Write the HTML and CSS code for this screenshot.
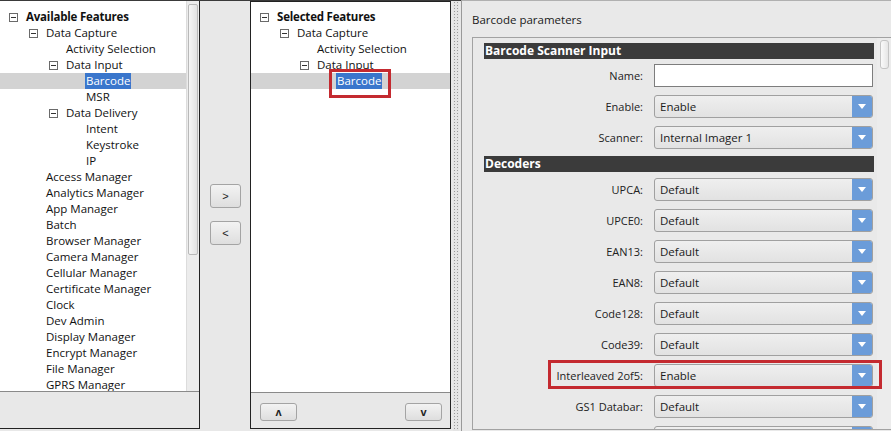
FILE: index.html
```html
<!DOCTYPE html>
<html lang="en">
<head>
  <meta charset="UTF-8" />
  <title>Barcode parameters</title>
  <link rel="stylesheet" href="styles.css">
</head>
<body>
<div class="app">

  <!-- available features -->
  <div class="pane pane-left">
    <div class="list-wrap">
      <div class="tree">
        <div class="node l0 bold"><span class="tog"></span>Available Features</div>
        <div class="node l1"><span class="tog"></span>Data Capture</div>
        <div class="node l2"><span class="tog none"></span>Activity Selection</div>
        <div class="node l2"><span class="tog"></span>Data Input</div>
        <div class="node l3 sel"><span class="tog none"></span><span class="hl">Barcode</span></div>
        <div class="node l3"><span class="tog none"></span>MSR</div>
        <div class="node l2"><span class="tog"></span>Data Delivery</div>
        <div class="node l3"><span class="tog none"></span>Intent</div>
        <div class="node l3"><span class="tog none"></span>Keystroke</div>
        <div class="node l3"><span class="tog none"></span>IP</div>
        <div class="node l1"><span class="tog none"></span>Access Manager</div>
        <div class="node l1"><span class="tog none"></span>Analytics Manager</div>
        <div class="node l1"><span class="tog none"></span>App Manager</div>
        <div class="node l1"><span class="tog none"></span>Batch</div>
        <div class="node l1"><span class="tog none"></span>Browser Manager</div>
        <div class="node l1"><span class="tog none"></span>Camera Manager</div>
        <div class="node l1"><span class="tog none"></span>Cellular Manager</div>
        <div class="node l1"><span class="tog none"></span>Certificate Manager</div>
        <div class="node l1"><span class="tog none"></span>Clock</div>
        <div class="node l1"><span class="tog none"></span>Dev Admin</div>
        <div class="node l1"><span class="tog none"></span>Display Manager</div>
        <div class="node l1"><span class="tog none"></span>Encrypt Manager</div>
        <div class="node l1"><span class="tog none"></span>File Manager</div>
        <div class="node l1"><span class="tog none"></span>GPRS Manager</div>
      </div>
      <div class="vscroll"><div class="thumb"></div></div>
    </div>
    <div class="pane-foot"></div>
  </div>

  <!-- move buttons -->
  <div class="mover">
    <button class="btn btn-move">&gt;</button>
    <button class="btn btn-move">&lt;</button>
  </div>

  <!-- selected features -->
  <div class="pane pane-mid">
    <div class="list-wrap">
      <div class="tree">
        <div class="node l0 bold"><span class="tog"></span>Selected Features</div>
        <div class="node l1"><span class="tog"></span>Data Capture</div>
        <div class="node l2"><span class="tog none"></span>Activity Selection</div>
        <div class="node l2"><span class="tog"></span>Data Input</div>
        <div class="node l3 sel"><span class="tog none"></span><span class="hl marked">Barcode</span></div>
      </div>
    </div>
    <div class="pane-foot foot-btns">
      <button class="btn btn-order">&#x028C;</button>
      <button class="btn btn-order">v</button>
    </div>
  </div>

  <div class="splitter"></div>

  <!-- parameters -->
  <div class="params">
    <div class="params-title">Barcode parameters</div>
    <div class="params-box">
      <div class="form">
        <div class="section-head">Barcode Scanner Input</div>
        <div class="row"><label>Name:</label><div class="text-input"></div></div>
        <div class="row"><label>Enable:</label><div class="select"><span>Enable</span><i class="arrow"></i></div></div>
        <div class="row"><label>Scanner:</label><div class="select"><span>Internal Imager 1</span><i class="arrow"></i></div></div>

        <div class="section-head sec2">Decoders</div>
        <div class="row"><label>UPCA:</label><div class="select"><span>Default</span><i class="arrow"></i></div></div>
        <div class="row"><label>UPCE0:</label><div class="select"><span>Default</span><i class="arrow"></i></div></div>
        <div class="row"><label>EAN13:</label><div class="select"><span>Default</span><i class="arrow"></i></div></div>
        <div class="row"><label>EAN8:</label><div class="select"><span>Default</span><i class="arrow"></i></div></div>
        <div class="row"><label>Code128:</label><div class="select"><span>Default</span><i class="arrow"></i></div></div>
        <div class="row"><label>Code39:</label><div class="select"><span>Default</span><i class="arrow"></i></div></div>
        <div class="row marked-row"><label>Interleaved 2of5:</label><div class="select"><span>Enable</span><i class="arrow"></i></div></div>
        <div class="row"><label>GS1 Databar:</label><div class="select"><span>Default</span><i class="arrow"></i></div></div>
        <div class="row"><label></label><div class="select"><span></span><i class="arrow"></i></div></div>
      </div>
      <div class="vscroll vscroll-r"><div class="thumb"></div></div>
    </div>
  </div>

</div>
</body>
</html>
```

FILE: styles.css
```css
body {
  margin: 0;
  font-family: "Open Sans", "Liberation Sans", sans-serif;
  font-size: 11.5px;
  color: #111;
  background: #e8e8e8;
  overflow: hidden;
}
.app {
  display: flex;
  height: 431px;
  width: 891px;
  border-top: 1px solid #3a3a3a;
  box-sizing: border-box;
}

/* panes with trees */
.pane {
  display: flex;
  flex-direction: column;
  height: 428px;
  box-sizing: border-box;
  border-bottom: 1px solid #222;
  background: #e8e8e8;
}
.pane-left {
  width: 200px;
  border-right: 1px solid #222;
}
.pane-mid {
  width: 201px;
  border-left: 1px solid #222;
  border-right: 1px solid #222;
  border-top: 1px solid #222;
}
.list-wrap {
  display: flex;
  height: 390px;
  background: #fff;
  border-bottom: 1px solid #8a8a8a;
  overflow: hidden;
}
.tree {
  flex: 1;
  padding-top: 8px;
}
.pane-mid .tree {
  padding-top: 7px;
}
.node {
  height: 16px;
  line-height: 16px;
  white-space: nowrap;
  display: flex;
  align-items: center;
}
.node.bold {
  font-weight: bold;
  letter-spacing: -0.2px;
}
.l0 { padding-left: 9px; }
.l1 { padding-left: 29px; }
.l2 { padding-left: 49px; }
.l3 { padding-left: 69px; }

.tog {
  width: 7px;
  height: 7px;
  border: 1px solid #6a6a6a;
  margin-right: 8px;
  position: relative;
  flex: none;
  background: #fff;
}
.tog::after {
  content: "";
  position: absolute;
  left: 1px;
  right: 1px;
  top: 3px;
  height: 1px;
  background: #333;
}
.tog.none {
  visibility: hidden;
}
.node.sel {
  background: #d3d3d3;
}
.hl {
  background: #3a76cc;
  color: #fff;
  padding: 0 1px;
  margin-left: -1px;
  line-height: 16px;
  position: relative;
}
.hl.marked::after {
  content: "";
  position: absolute;
  left: -7px;
  right: -9px;
  top: -4px;
  bottom: -9px;
  border: 3px solid #c42a30;
}

.vscroll {
  width: 13px;
  background: #ececec;
  border-left: 1px solid #dcdcdc;
  box-sizing: border-box;
  padding: 3px 1px 0 1px;
}
.thumb {
  height: 249px;
  border: 1px solid #b9b9b9;
  border-radius: 2px;
  background: linear-gradient(to right, #f6f6f6, #e2e2e2);
}
.pane-foot {
  flex: 1;
}
.foot-btns {
  display: flex;
  justify-content: space-between;
  align-items: flex-start;
  padding: 10px 8px 0 9px;
}

.btn {
  font-family: "Liberation Sans", sans-serif;
  border: 1px solid #a4a4a4;
  border-radius: 3px;
  background: linear-gradient(#f3f3f3, #dedede);
  color: #222;
  padding: 0;
  cursor: pointer;
}
.mover {
  width: 50px;
  display: flex;
  flex-direction: column;
  align-items: flex-start;
  gap: 13px;
  padding: 183px 0 0 10px;
  box-sizing: border-box;
}
.btn-move {
  width: 31px;
  height: 24px;
  font-size: 11px;
}
.btn-order {
  width: 37px;
  height: 18px;
  font-size: 11px;
  font-weight: bold;
  line-height: 14px;
}

.splitter {
  width: 6px;
  margin: 0 2px 0 2px;
  background-image: radial-gradient(#9a9a9a 0.6px, transparent 0.9px);
  background-size: 3px 3px;
  background-color: #e4e4e4;
}

/* parameters panel */
.params {
  flex: 1;
  border-left: 1px solid #9a9a9a;
  border-top: 1px solid #b0b0b0;
  margin-top: -1px;
  padding: 0 0 0 10px;
  display: flex;
  flex-direction: column;
  background: #e9e9e9;
}
.params-title {
  height: 36px;
  line-height: 38px;
  font-size: 11.5px;
  color: #1a1a1a;
}
.params-box {
  flex: 1;
  display: flex;
  border: 1px solid #a2a2a2;
  border-right: none;
  margin-bottom: 1px;
  overflow: hidden;
}
.form {
  flex: 1;
  padding: 5px 3px 0 11px;
  display: flex;
  flex-direction: column;
  gap: 8px;
}
.section-head {
  height: 16px;
  line-height: 16px;
  background: #3b3b3b;
  color: #fff;
  font-weight: bold;
  font-size: 12px;
  padding-left: 1px;
  margin-bottom: -3px;
}
.section-head.sec2 {
  margin-top: -1px;
  margin-bottom: -2px;
}
.row {
  display: flex;
  align-items: center;
  height: 23px;
  flex: none;
}
.row label {
  width: 159px;
  text-align: right;
  padding-right: 11px;
  box-sizing: content-box;
  font-size: 11px;
  color: #222;
  white-space: nowrap;
}
.text-input {
  width: 219px;
  height: 23px;
  box-sizing: border-box;
  background: #fff;
  border: 1px solid #7d7d7d;
}
.select {
  width: 219px;
  height: 23px;
  box-sizing: border-box;
  display: flex;
  align-items: center;
  border: 1px solid #a0a0a0;
  border-radius: 3px;
  background: linear-gradient(#efefef, #e2e2e2);
  overflow: hidden;
}
.select span {
  flex: 1;
  padding-left: 5px;
  font-size: 11.5px;
  color: #1a1a1a;
}
.arrow {
  width: 20px;
  height: 100%;
  background: #6b9cd9;
  position: relative;
}
.arrow::after {
  content: "";
  position: absolute;
  left: 6px;
  top: 8px;
  border-left: 4px solid transparent;
  border-right: 4px solid transparent;
  border-top: 5px solid #fff;
}
.marked-row {
  position: relative;
}
.marked-row::after {
  content: "";
  position: absolute;
  left: 64px;
  right: -8px;
  top: -4px;
  bottom: -2px;
  border: 3px solid #c42a30;
}
.vscroll-r {
  width: 14px;
  padding: 2px 2px 0 3px;
  border-left: none;
  background: #ececec;
}
.vscroll-r .thumb {
  height: 27px;
  border-radius: 3px;
  border-color: #c4c4c4;
  background: linear-gradient(to right, #fafafa, #e6e6e6);
}
```
